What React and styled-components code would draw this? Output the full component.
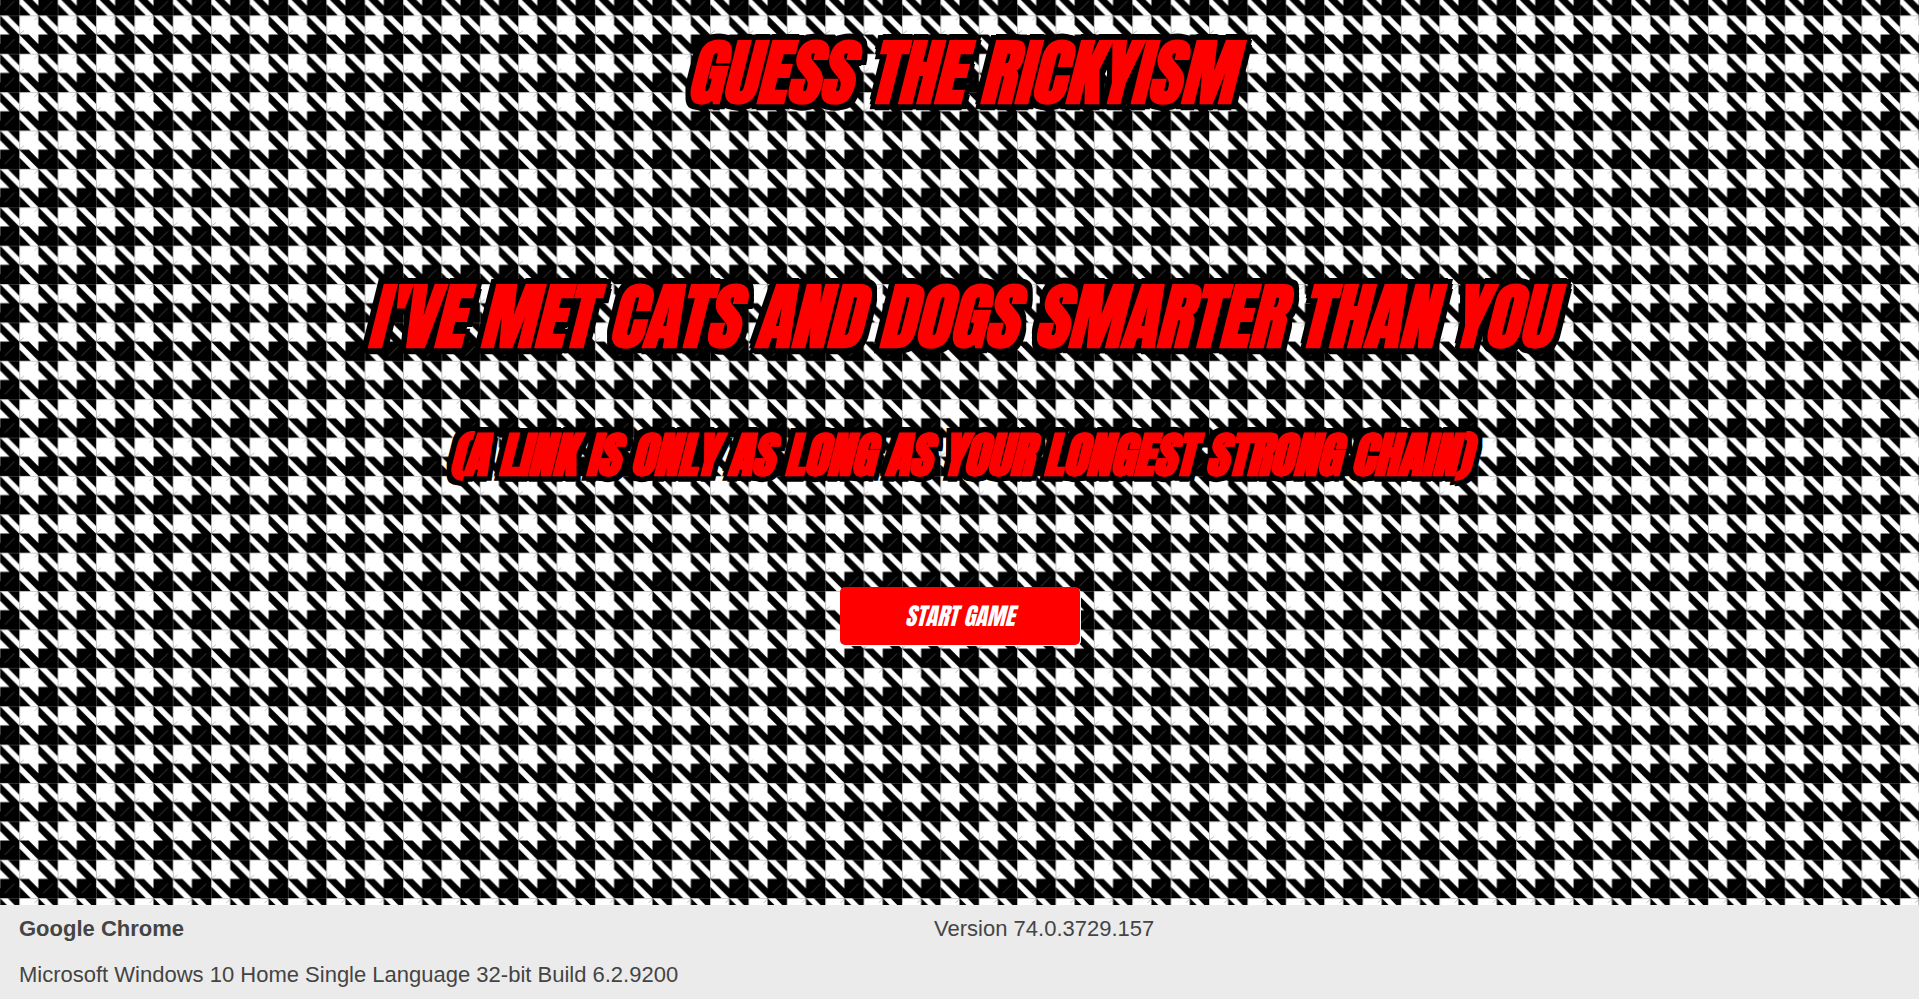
import React from "react";
import styled, { createGlobalStyle } from "styled-components";

const GlobalStyle = createGlobalStyle`
  * { box-sizing: border-box; }
  body { margin: 0; font-family: "Liberation Sans", Arial, sans-serif; }
`;

const Page = styled.div`
  min-height: 100vh;
  display: flex;
  flex-direction: column;
`;

const Hero = styled.main`
  position: relative;
  flex: 1;
  display: flex;
  flex-direction: column;
  align-items: center;
  padding-top: 19px;
  overflow: hidden;
  background: #fff;
  font-family: Anton, Impact, sans-serif;
  font-style: italic;
  text-align: center;
  text-transform: uppercase;
`;

const Backdrop = styled.svg`
  position: absolute;
  inset: 0;
  width: 100%;
  height: 100%;
`;

const OutlinedText = styled.p`
  position: relative;
  margin: 0;
  color: #f00;
  font-weight: 700;
  text-shadow:
    -5px -5px 0 #000, 0 -6px 0 #000, 5px -5px 0 #000,
    -5px 0 0 #000, 5px 0 0 #000,
    -5px 5px 0 #000, 0 6px 0 #000, 5px 5px 0 #000;
`;

const Headline = styled(OutlinedText)`
  font-size: 72px;
  line-height: 108px;
`;

const Quote = styled(Headline)`
  margin-top: 136px;
`;

const Subquote = styled(OutlinedText)`
  margin-top: 48px;
  font-size: 48px;
  line-height: 72px;
  -webkit-text-stroke: 1px #f00;
`;

const StartButton = styled.button`
  position: relative;
  width: 240px;
  height: 58px;
  margin-top: 96px;
  padding: 0;
  border: 0;
  border-radius: 5px;
  background: #f00;
  box-shadow: 1px 1px 0 #fff;
  color: #fff;
  font: inherit;
  font-size: 24px;
  line-height: 36px;
  text-transform: inherit;
`;

const Footer = styled.footer`
  display: grid;
  grid-template-columns: 18fr 19fr;
  row-gap: 15px;
  padding: 8px 19px 9px;
  background: #ebebeb;
  color: #444;
  font-size: 22px;
  line-height: 31px;
`;

const Browser = styled.strong`
  font-weight: 700;
`;

const Platform = styled.span`
  grid-column: 1 / -1;
`;

function Houndstooth() {
  return (
    <Backdrop viewBox="0 0 2000 944" preserveAspectRatio="xMinYMin slice" aria-hidden="true">
      <defs>
        <pattern id="tooth" x="20" y="16" width="40" height="40" patternUnits="userSpaceOnUse">
          <rect width="40" height="40" fill="#000" />
          <g fill="#fff">
            <path d="M0 0H20V10L30 20H20V30L10 20H0Z" />
            <path d="M20 0H28L40 12V20Z" />
            <path d="M0 20V28L12 40H20Z" />
          </g>
          <path d="M0 0H40M0 0V40" stroke="#777" strokeOpacity=".8" strokeWidth="1.2" fill="none" />
          <path d="M25 35L35 25M0 20L5 16M16 5L20 1" stroke="#777" strokeOpacity=".7" strokeWidth=".8" fill="none" />
        </pattern>
      </defs>
      <rect width="2000" height="2000" fill="url(#tooth)" />
    </Backdrop>
  );
}

export default function App() {
  return (
    <Page>
      <GlobalStyle />
      <Hero>
        <Houndstooth />
        <Headline as="h1">Guess the Rickyism</Headline>
        <Quote>I've met cats and dogs smarter than you</Quote>
        <Subquote>(A link is only as long as your longest strong chain)</Subquote>
        <StartButton type="button">Start game</StartButton>
      </Hero>
      <Footer>
        <Browser>Google Chrome</Browser>
        <span>Version 74.0.3729.157</span>
        <Platform>Microsoft Windows 10 Home Single Language 32-bit Build 6.2.9200</Platform>
      </Footer>
    </Page>
  );
}
